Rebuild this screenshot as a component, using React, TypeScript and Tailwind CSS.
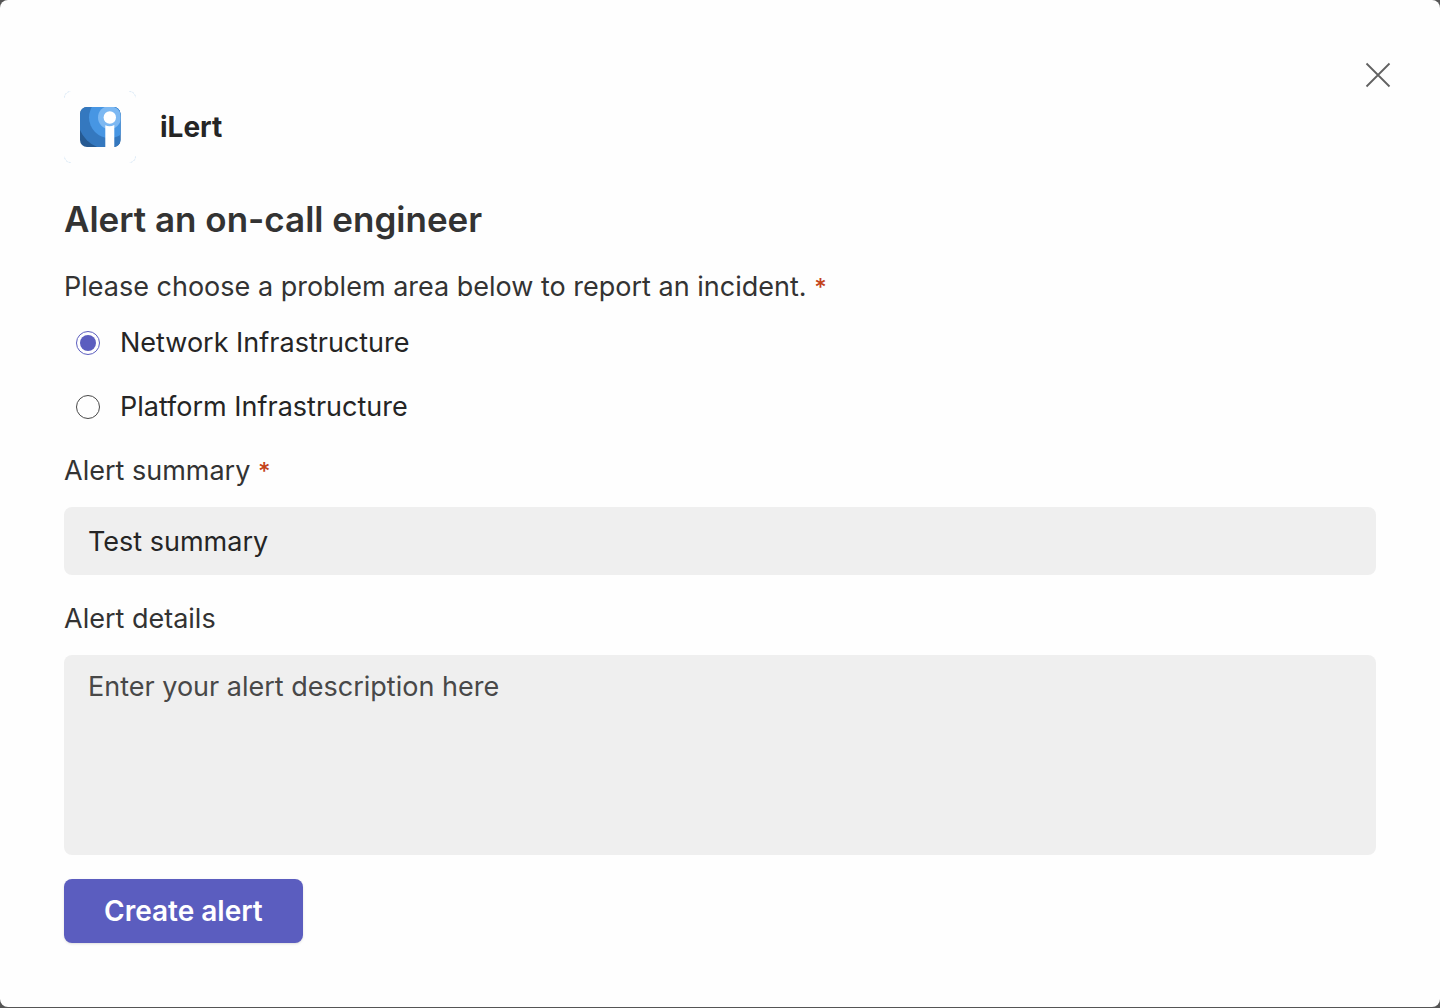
import { useState } from "react";

const areas = ["Network Infrastructure", "Platform Infrastructure"];

function Logo() {
  return (
    <svg className="size-[72px] shrink-0" viewBox="0 0 72 72" fill="none" aria-hidden="true">
      <defs>
        <clipPath id="tile">
          <rect x="16" y="16" width="40.500" height="40" rx="7" />
        </clipPath>
      </defs>
      <path
        d="M.5 6.5a6 6 0 0 1 6-6M65.500 .5a6 6 0 0 1 6 6M71.500 65.500a6 6 0 0 1-6 6M6.500 71.500a6 6 0 0 1-6-6"
        stroke="#d3e5f5"
        strokeDasharray="2 1"
      />
      <g clipPath="url(#tile)">
        <rect x="16" y="16" width="41" height="40" fill="#265a92" />
        <circle cx="45.500" cy="26.500" r="32" fill="#3478bf" />
        <circle cx="45.500" cy="26.500" r="20.500" fill="#4796e3" />
        <circle cx="45.500" cy="26.500" r="11.500" fill="#7cb8f2" />
        <circle cx="45.800" cy="26.500" r="6.200" fill="#fff" />
        <path d="M41.300 34.300q4.500 2 9-.300V56h-9z" fill="#fff" />
      </g>
    </svg>
  );
}

function Required() {
  return <span className="text-2xl leading-none font-medium text-[#c4421a]">*</span>;
}

export default function App() {
  const [area, setArea] = useState(areas[0]);
  const [summary, setSummary] = useState("Test summary");

  return (
    <div className="flex min-h-screen flex-col bg-[#555555] pb-px font-['Inter',sans-serif] text-[27px] leading-10 text-[#252525]">
      <main className="relative flex-1 rounded-lg bg-[#fefefe] px-16 pt-[91px] pb-16">
        <button type="button" aria-label="Close" className="absolute top-[59px] right-[46px] size-8">
          <svg viewBox="0 0 32 32" className="size-8" stroke="#616161" strokeWidth="1.8" fill="none">
            <path d="M4.500 4.500l23 23M27.500 4.500l-23 23" />
          </svg>
        </button>

        <header className="flex items-center gap-6">
          <Logo />
          <span className="text-[28px] font-bold">iLert</span>
        </header>

        <form onSubmit={(e) => e.preventDefault()}>
          <h1 className="mt-8 text-[35px] leading-[48px] font-semibold text-[#333333]">Alert an on-call engineer</h1>

          <fieldset className="mt-6">
            <legend className="text-[#333333]">
              Please choose a problem area below to report an incident. <Required />
            </legend>
            <div className="mt-4 flex flex-col gap-6 pl-3">
              {areas.map((name) => (
                <label key={name} className="flex items-center gap-5">
                  <input
                    type="radio"
                    name="area"
                    checked={area === name}
                    onChange={() => setArea(name)}
                    className="size-6 shrink-0 appearance-none rounded-full border border-[#484848] bg-clip-content p-[3px] checked:border-[#5b5dbf] checked:bg-[#5b5dbf]"
                  />
                  {name}
                </label>
              ))}
            </div>
          </fieldset>

          <label htmlFor="summary" className="mt-6 block text-[#333333]">
            Alert summary <Required />
          </label>
          <input
            id="summary"
            type="text"
            required
            value={summary}
            onChange={(e) => setSummary(e.target.value)}
            className="mt-4 block h-[68px] w-full rounded-lg bg-[#efefef] px-6 outline-none"
          />

          <label htmlFor="details" className="mt-6 block text-[#333333]">
            Alert details
          </label>
          <textarea
            id="details"
            placeholder="Enter your alert description here"
            className="mt-4 block h-[200px] w-full resize-none rounded-lg bg-[#efefef] px-6 py-3 outline-none placeholder:text-[#484848]"
          />

          <button
            type="submit"
            className="mt-6 block h-16 rounded-lg bg-[#5b5dbf] px-10 text-[28px] font-semibold text-white shadow-sm"
          >
            Create alert
          </button>
        </form>
      </main>
    </div>
  );
}
